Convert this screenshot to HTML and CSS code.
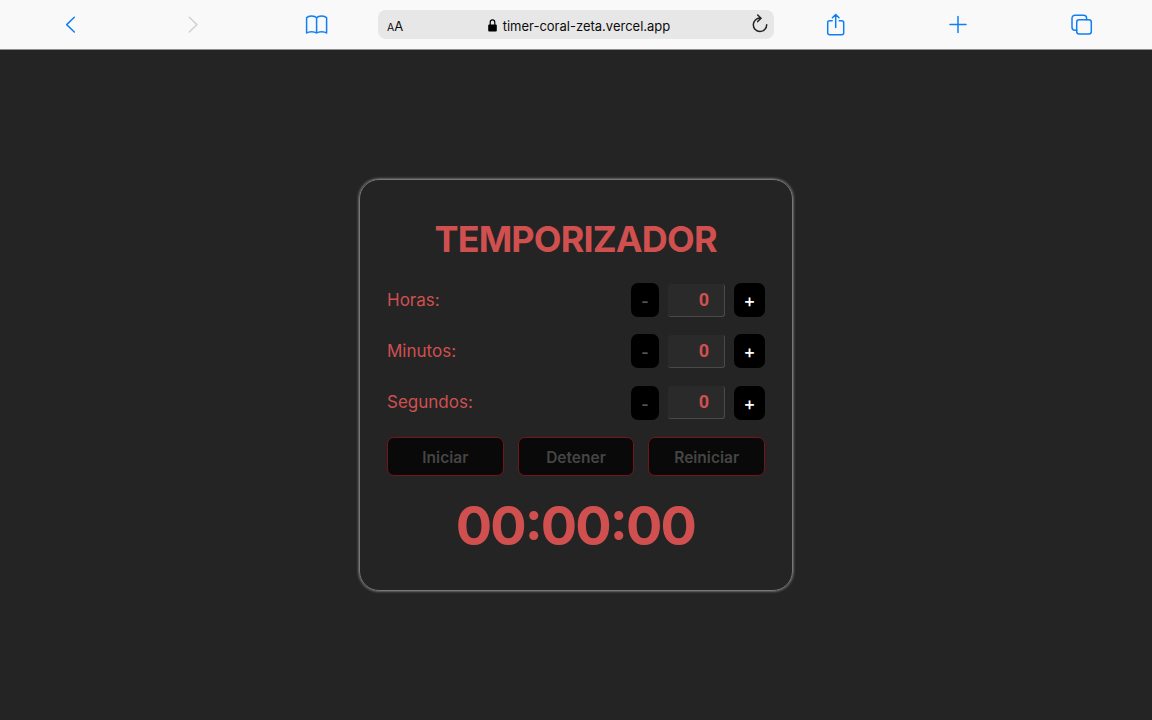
FILE: index.html
```html
<!DOCTYPE html>
<html lang="es">
<head>
<meta charset="utf-8">
<title>Temporizador</title>
<link rel="stylesheet" href="styles.css">
</head>
<body>
<header class="toolbar">
  <svg class="icon" viewBox="0 0 24 24"><path d="M15.3 5.2 7.7 12.6l7.6 7.4"/></svg>
  <svg class="icon icon-off" viewBox="0 0 24 24"><path d="m7.3 5.2 7.6 7.4L7.3 20"/></svg>
  <svg class="icon" viewBox="0 0 24 24"><path d="M11.600 5.800C9.600 3.400 3.600 3.200 1.600 5.800V21c2.200-1.800 7.800-1.800 10 0 2.200-1.800 7.800-1.800 10 0V5.800C19.600 3.200 13.600 3.400 11.600 5.800V21"/></svg>
  <div class="address">
    <span class="reader"><span class="reader-small">A</span>A</span>
    <span class="site"><svg class="lock" viewBox="0 0 9 13"><path d="M2.200 6V3.500a2.300 2.700 0 0 1 4.600 0V6" fill="none" stroke="#000" stroke-width="1.200"/><rect x=".2" y="5.500" width="8.600" height="7" rx="1"/></svg>timer-coral-zeta.vercel.app</span>
    <svg class="reload" viewBox="0 0 18 20"><path d="M9.200 4.100a6.700 6.700 0 1 0 6.500 6.700M6.700 1l3.300 3.200-3.300 3.400"/></svg>
  </div>
  <svg class="icon" viewBox="0 0 24 24"><path d="M9.200 8.700H6.700a2 2 0 0 0-2 2v10a2 2 0 0 0 2 2h12a2 2 0 0 0 2-2v-10a2 2 0 0 0-2-2h-2.500M12.700 15.500V2.800M9.400 5.800l3.300-3.300L16 5.800"/></svg>
  <svg class="icon" viewBox="0 0 24 24"><path d="M12 4.600v16M4 12.600h16"/></svg>
  <svg class="icon" viewBox="0 0 24 24"><rect x="7.700" y="7.800" width="14.600" height="14.200" rx="2.500"/><path d="M7.700 18.200H6a3 3 0 0 1-3-3V6.200a3 3 0 0 1 3-3h8.600a3 3 0 0 1 3 3v1.600"/></svg>
</header>
<main class="page">
  <section class="card">
    <h1 class="title">TEMPORIZADOR</h1>
    <div class="fields">
      <div class="field"><span class="label">Horas:</span><button class="step minus" disabled>-</button><span class="value">0</span><button class="step plus">+</button></div>
      <div class="field"><span class="label">Minutos:</span><button class="step minus" disabled>-</button><span class="value">0</span><button class="step plus">+</button></div>
      <div class="field"><span class="label">Segundos:</span><button class="step minus" disabled>-</button><span class="value">0</span><button class="step plus">+</button></div>
    </div>
    <div class="actions">
      <button class="action" disabled>Iniciar</button>
      <button class="action" disabled>Detener</button>
      <button class="action" disabled>Reiniciar</button>
    </div>
    <div class="time">00:00:00</div>
  </section>
</main>
</body>
</html>
```

FILE: styles.css
```css
* { box-sizing: border-box; }
body {
  margin: 0;
  height: 720px;
  display: flex;
  flex-direction: column;
  background: #242424;
  font-family: Inter, "Liberation Sans", sans-serif;
}
.toolbar {
  height: 50px;
  flex: none;
  display: grid;
  grid-template-columns: repeat(3, 1fr) 396px repeat(3, 1fr);
  align-items: center;
  justify-items: center;
  padding: 0 10px 1px;
  background: #f9f9f9;
  border-bottom: 1px solid #8f8f8f;
}
.icon {
  width: 24px;
  height: 24px;
  fill: none;
  stroke: #107ff5;
  stroke-width: 1.5;
  stroke-linecap: round;
  stroke-linejoin: round;
}
.icon-off { stroke: #d2d2d4; }
.address {
  width: 396px;
  height: 29px;
  display: grid;
  grid-template-columns: 40px 1fr 40px;
  align-items: center;
  padding: 0 5px 0 9px;
  margin-top: 1px;
  border-radius: 8px;
  background: #e7e7e7;
  color: #0c0c0c;
  font-size: 13px;
}
.reader { padding-top: 2px; }
.reader-small { font-size: 10.5px; }
.site {
  display: flex;
  align-items: center;
  justify-content: center;
  padding: 2px 0 0 2px;
}
.lock { width: 9px; height: 13px; margin: -1px 6px 0 0; }
.reload {
  width: 18px;
  height: 20px;
  margin-top: -1px;
  justify-self: end;
  fill: none;
  stroke: #222;
  stroke-width: 1.5;
  stroke-linecap: round;
}
.page {
  flex: 1;
  display: flex;
  align-items: center;
  justify-content: center;
}
.card {
  width: 434px;
  height: 412px;
  padding: 35px 27px 0;
  border: 1px solid #777;
  border-radius: 20px;
  box-shadow: 0 0 3px #aaa;
  color: #d05050;
}
.title {
  margin: 0 0 20px;
  font-size: 36px;
  font-weight: 680;
  line-height: 48px;
  letter-spacing: -0.85px;
  text-indent: -0.8px;
  text-align: center;
}
.fields { display: grid; gap: 17.4px; }
.field {
  height: 34px;
  display: flex;
  align-items: center;
}
.label { margin-right: auto; font-size: 17px; line-height: 32px; padding-bottom: 0.6px; }
.step {
  height: 34px;
  padding: 2px 0 0;
  border: 0;
  border-radius: 7px;
  background: #000;
  color: #fff;
  font-family: inherit;
  font-size: 16px;
  font-weight: 600;
}
.minus { width: 28px; color: #555; }
.plus { width: 31px; padding-top: 1px; font-size: 18px; font-weight: 500; }
.value {
  width: 57px;
  height: 33px;
  margin: 0 9px;
  padding-right: 15px;
  border-right: 1px solid #4a4a4a;
  border-bottom: 1px solid #4a4a4a;
  border-radius: 3px;
  background: #2a2a2a;
  font: 700 18px/32px Roboto, sans-serif;
  text-align: right;
}
.actions {
  display: grid;
  grid-template-columns: repeat(3, 1fr);
  gap: 14px;
  margin-top: 17.2px;
}
.action {
  height: 39px;
  padding: 3px 0 0;
  border: 1px solid #741519;
  border-radius: 7px;
  background: #090909;
  color: #454545;
  font: 600 15.5px Inter, sans-serif;
}
.time {
  margin-top: 20px;
  font-size: 54px;
  font-weight: 680;
  line-height: 60px;
  letter-spacing: -1.9px;
  text-indent: -1.4px;
  font-feature-settings: "calt" 1;
  text-align: center;
}
```
